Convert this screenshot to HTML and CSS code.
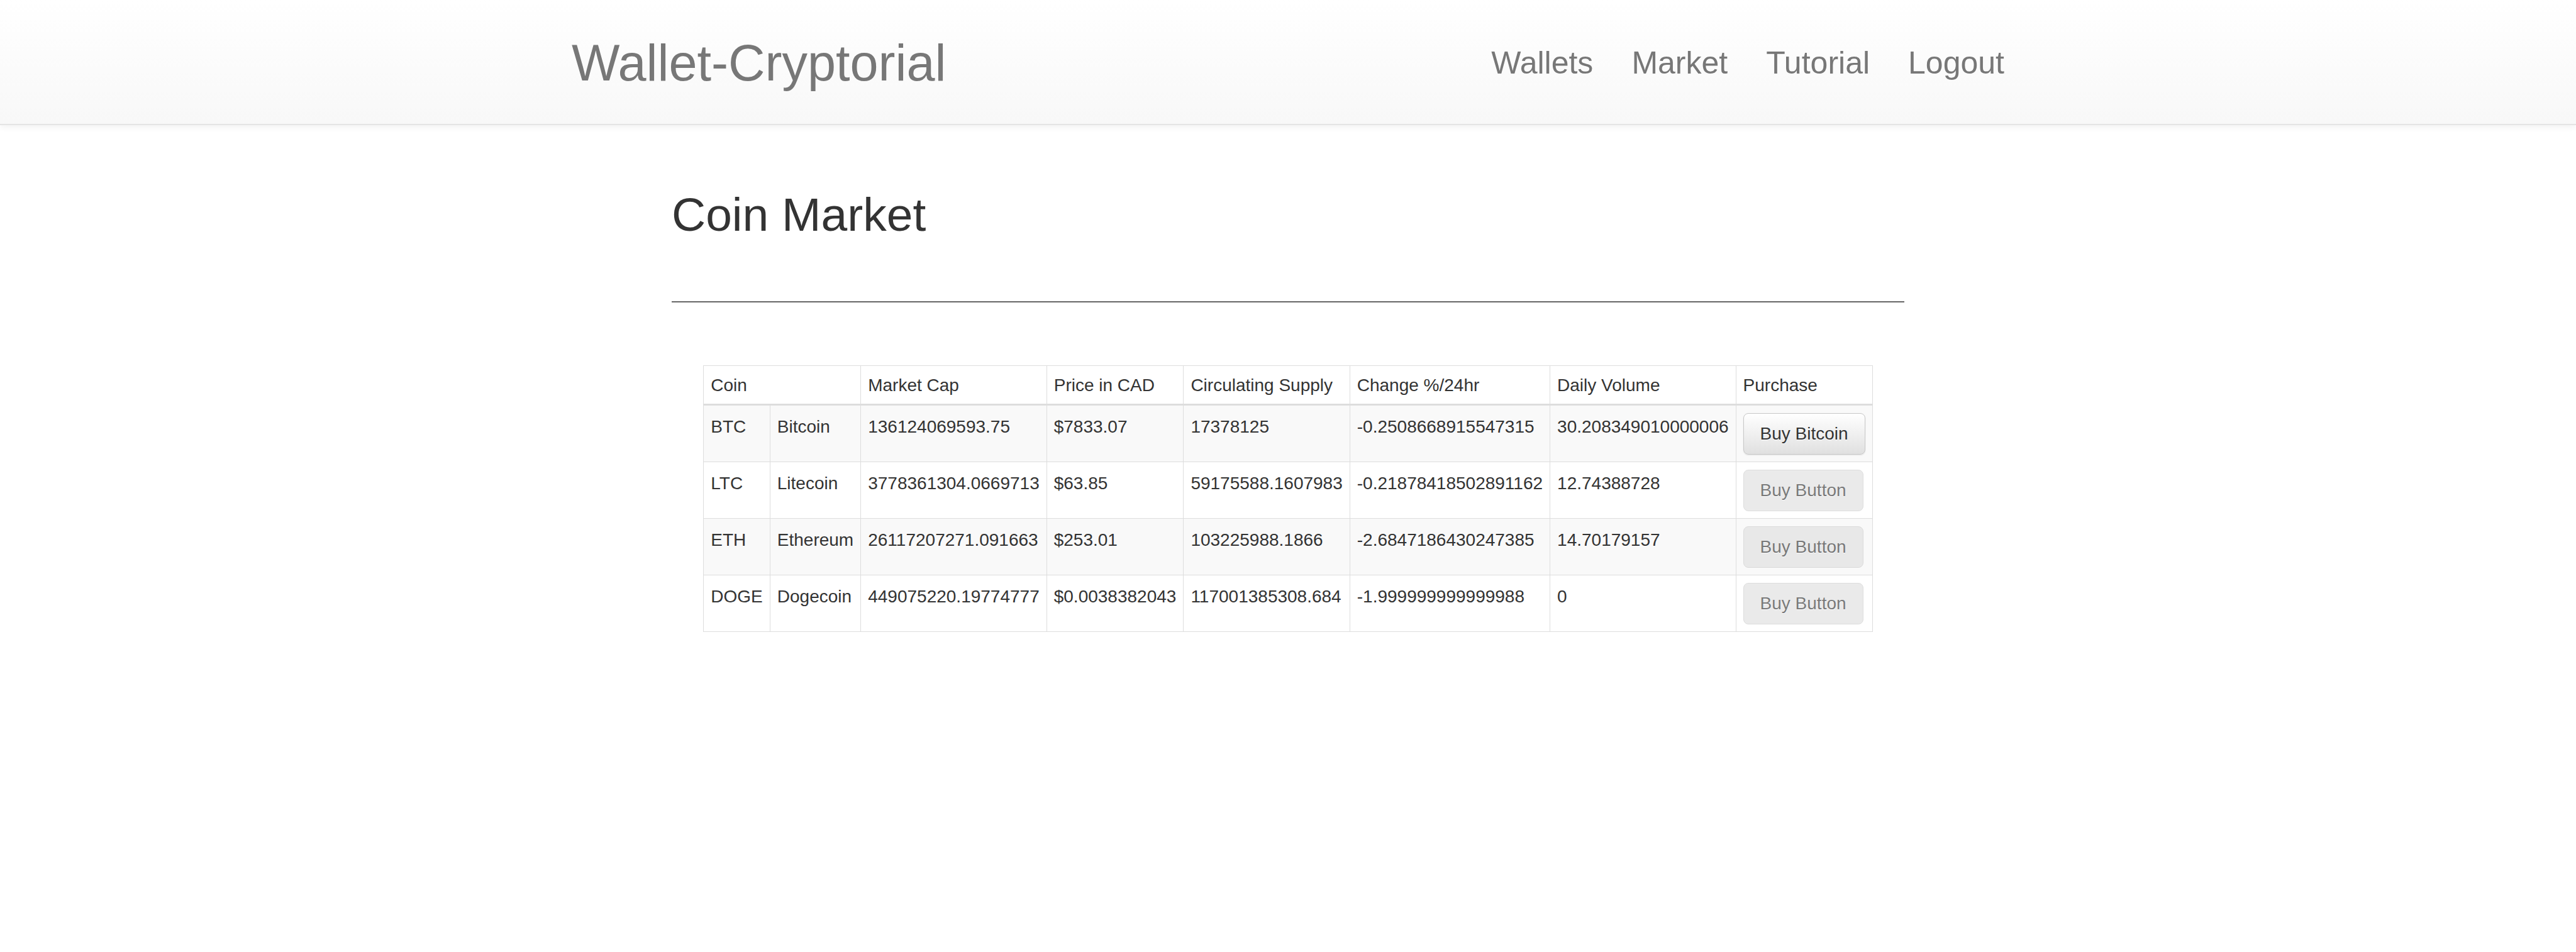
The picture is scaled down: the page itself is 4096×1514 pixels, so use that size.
FILE: index.html
```html
<!DOCTYPE html>
<html lang="en">
<head>
<meta charset="utf-8">
<title>Wallet-Cryptorial</title>
<link rel="stylesheet" href="styles.css">
</head>
<body>
<header class="navbar">
  <div class="navbar-inner">
    <a class="brand" href="#">Wallet-Cryptorial</a>
    <nav class="nav">
      <a href="#">Wallets</a>
      <a href="#">Market</a>
      <a href="#">Tutorial</a>
      <a href="#">Logout</a>
    </nav>
  </div>
</header>
<main class="content">
  <h1 class="title">Coin Market</h1>
  <hr class="rule">
  <table class="market">
    <thead>
      <tr>
        <th colspan="2">Coin</th>
        <th>Market Cap</th>
        <th>Price in CAD</th>
        <th>Circulating Supply</th>
        <th>Change %/24hr</th>
        <th>Daily Volume</th>
        <th>Purchase</th>
      </tr>
    </thead>
    <tbody>
      <tr>
        <td>BTC</td><td>Bitcoin</td><td>136124069593.75</td><td>$7833.07</td><td>17378125</td><td>-0.2508668915547315</td><td>30.208349010000006</td>
        <td><button class="btn">Buy Bitcoin</button></td>
      </tr>
      <tr>
        <td>LTC</td><td>Litecoin</td><td>3778361304.0669713</td><td>$63.85</td><td>59175588.1607983</td><td>-0.21878418502891162</td><td>12.74388728</td>
        <td><button class="btn" disabled>Buy Button</button></td>
      </tr>
      <tr>
        <td>ETH</td><td>Ethereum</td><td>26117207271.091663</td><td>$253.01</td><td>103225988.1866</td><td>-2.6847186430247385</td><td>14.70179157</td>
        <td><button class="btn" disabled>Buy Button</button></td>
      </tr>
      <tr>
        <td>DOGE</td><td>Dogecoin</td><td>449075220.19774777</td><td>$0.0038382043</td><td>117001385308.684</td><td>-1.999999999999988</td><td>0</td>
        <td><button class="btn" disabled>Buy Button</button></td>
      </tr>
    </tbody>
  </table>
</main>
</body>
</html>
```
FILE: styles.css
```css
html, body {
  margin: 0;
  padding: 0;
  background: #fff;
  font-family: "Liberation Sans", Arial, Helvetica, sans-serif;
  color: #333;
}

.navbar {
  height: 197px;
  background: linear-gradient(to bottom, #ffffff 0%, #f8f8f8 100%);
  border-bottom: 2px solid #e4e4e4;
  box-shadow: 0 3px 10px rgba(0, 0, 0, 0.06);
}

.navbar-inner {
  width: 2278px;
  margin: 0 auto;
  display: flex;
  justify-content: space-between;
  align-items: flex-start;
}

.brand {
  margin-top: 60px;
  font-size: 81px;
  line-height: 80px;
  color: #777;
  text-decoration: none;
}

.nav {
  display: flex;
  gap: 61px;
  margin-top: 75px;
}

.nav a {
  font-size: 50px;
  line-height: 50px;
  color: #777;
  text-decoration: none;
}

.content {
  width: 1960px;
  margin: 0 auto;
  padding-top: 101px;
}

.title {
  margin: 0;
  font-size: 75px;
  line-height: 82px;
  font-weight: normal;
  color: #333;
}

.rule {
  margin: 97px 0 0;
  border: 0;
  border-top: 2px solid #666;
  height: 0;
}

.market {
  margin: 100px auto 0;
  border-collapse: collapse;
  font-size: 28px;
  color: #333;
  border: 1px solid #ddd;
}

.market th {
  text-align: left;
  font-weight: normal;
  padding: 12px 11px 11px;
  line-height: 37px;
  border: 1px solid #ddd;
  border-bottom: 3px solid #ddd;
  vertical-align: bottom;
  white-space: nowrap;
}

.market td {
  padding: 12px 11px 11px;
  line-height: 44px;
  border: 1px solid #ddd;
  vertical-align: top;
  white-space: nowrap;
}

.market tbody tr:nth-child(odd) td {
  background: #f9f9f9;
}

.btn {
  display: block;
  font-family: "Liberation Sans", Arial, Helvetica, sans-serif;
  font-size: 28px;
  line-height: 40px;
  padding: 12px 26px;
  color: #333;
  border: 1px solid #c8c8c8;
  border-radius: 8px;
  background: linear-gradient(to bottom, #ffffff 0%, #e0e0e0 100%);
  text-shadow: 0 1px 0 #fff;
  box-shadow: inset 0 1px 0 rgba(255, 255, 255, 0.15), 0 1px 2px rgba(0, 0, 0, 0.1);
  cursor: pointer;
}

.btn:disabled {
  background: #e0e0e0;
  border-color: #cccccc;
  box-shadow: none;
  opacity: 0.65;
  cursor: not-allowed;
}
```
